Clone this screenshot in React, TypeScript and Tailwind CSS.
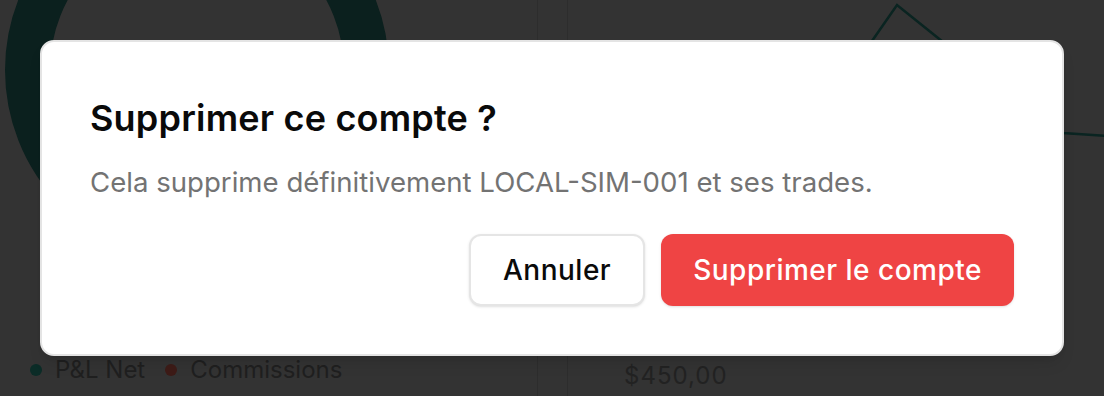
import React from "react";

export default function App() {
  return (
    <div
      className="relative w-[1104px] h-[396px] overflow-hidden bg-[#333333]"
      style={{ fontFamily: "Inter, 'Noto Sans', sans-serif" }}
    >
      {/* Background page (seen through the overlay) */}
      <div className="flex h-full w-full">
        <div className="flex h-full w-[538px] flex-col border-r border-[#2d2d2d]">
          <svg width="537" height="358" className="shrink-0">
            <circle cx="197" cy="70" r="169.5" fill="none" stroke="#0b201e" strokeWidth="45" />
          </svg>
          <div className="flex items-center pl-[30px] text-[24px] leading-none text-[#1f1f1f]">
            <span className="flex items-center gap-[13px]">
              <span className="h-[12px] w-[12px] shrink-0 rounded-full bg-[#0b2c27]" />
              P&amp;L Net
            </span>
            <span className="ml-[20px] flex items-center gap-[13px]">
              <span className="h-[12px] w-[12px] shrink-0 rounded-full bg-[#3d1b17]" />
              Commissions
            </span>
          </div>
        </div>
        <div className="w-[30px]" />
        <div className="flex h-full flex-1 flex-col border-l border-[#2d2d2d]">
          <svg width="536" height="364" className="shrink-0">
            <polyline
              points="280,80 304,41 329,5 375,42 430,95 495,133 540,136"
              fill="none"
              stroke="#0a2421"
              strokeWidth="2.5"
              strokeLinejoin="miter"
            />
          </svg>
          <div className="pl-[56px] text-[24px] leading-none tracking-[1px] text-[#222222]">$450,00</div>
        </div>
      </div>

      {/* Dialog */}
      <div className="absolute inset-0 flex items-start justify-center pt-[40px]">
        <div className="flex w-[1024px] flex-col gap-[32px] rounded-[14px] border-2 border-[#e4e4e4] bg-white p-[48px] shadow-lg">
          <div className="flex flex-col gap-[16px]">
            <h2 className="text-[36px] font-semibold leading-[56px] tracking-[0.2px] text-[#0a0a0a]">
              Supprimer ce compte ?
            </h2>
            <p className="text-[27.6px] leading-[40px] text-[#737373]">
              Cela supprime définitivement LOCAL-SIM-001 et ses trades.
            </p>
          </div>
          <div className="flex justify-end gap-[16px]">
            <button className="h-[72px] rounded-[12px] border-2 border-[#e5e5e5] bg-white px-[32px] text-[28px] font-medium tracking-[0.5px] text-[#0a0a0a] shadow-sm">
              Annuler
            </button>
            <button className="h-[72px] rounded-[12px] bg-[#ef4444] px-[32px] text-[28px] font-medium tracking-[0.5px] text-white shadow-sm">
              Supprimer le compte
            </button>
          </div>
        </div>
      </div>
    </div>
  );
}
